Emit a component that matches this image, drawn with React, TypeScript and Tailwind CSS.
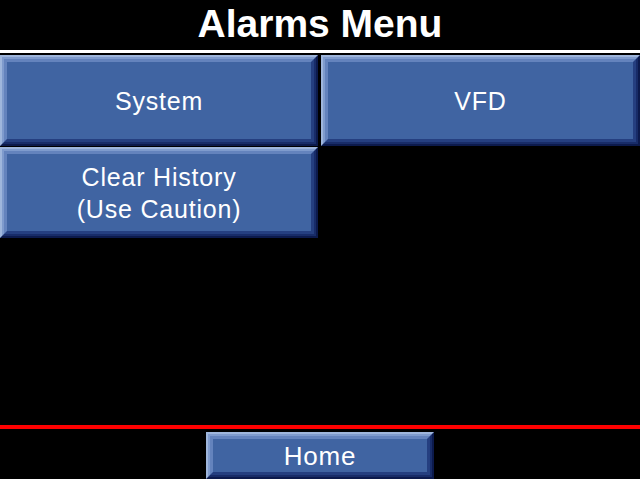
import * as React from "react";

const font = { fontFamily: '"Liberation Sans", Arial, sans-serif' };

// raised panel button, three stepped bevel rings
function BevelButton({
  className,
  children,
}: {
  className?: string;
  children: React.ReactNode;
}) {
  return (
    <div
      className={
        "flex border-2 border-t-[#9fb6dc] border-l-[#9fb6dc] border-r-[#0c1a4c] border-b-[#0c1a4c] " +
        (className ?? "")
      }
    >
      <div className="flex flex-1 border-2 border-t-[#7f9bcd] border-l-[#7f9bcd] border-r-[#182c68] border-b-[#182c68]">
        <div className="flex flex-1 border-[3px] border-t-[#6483bd] border-l-[#6483bd] border-r-[#253f80] border-b-[#253f80]">
          <div className="flex flex-1 items-center justify-center bg-[#4064a2] text-center leading-[32px] tracking-[0.8px] text-white">
            {children}
          </div>
        </div>
      </div>
    </div>
  );
}

export default function App() {
  return (
    <div className="flex h-[479px] w-[640px] flex-col bg-black" style={font}>
      <div className="h-[50px] pt-[4px] text-center text-[39px] font-bold leading-none text-white">
        Alarms Menu
      </div>
      <div className="h-[3px] bg-white" />

      <div className="mt-[2px] flex gap-[3px] text-[25px]">
        <BevelButton className="h-[91px] w-[318px]">System</BevelButton>
        <BevelButton className="h-[91px] flex-1">VFD</BevelButton>
      </div>
      <div className="mt-[1px] flex text-[25px]">
        <BevelButton className="h-[91px] w-[318px]">
          Clear History
          <br />
          (Use Caution)
        </BevelButton>
      </div>

      <div className="flex-1" />
      <div className="h-[4px] bg-[#ff0000]" />
      <div className="mt-[3px] flex justify-center text-[26px]">
        <BevelButton className="h-[47px] w-[228px]">Home</BevelButton>
      </div>
    </div>
  );
}
